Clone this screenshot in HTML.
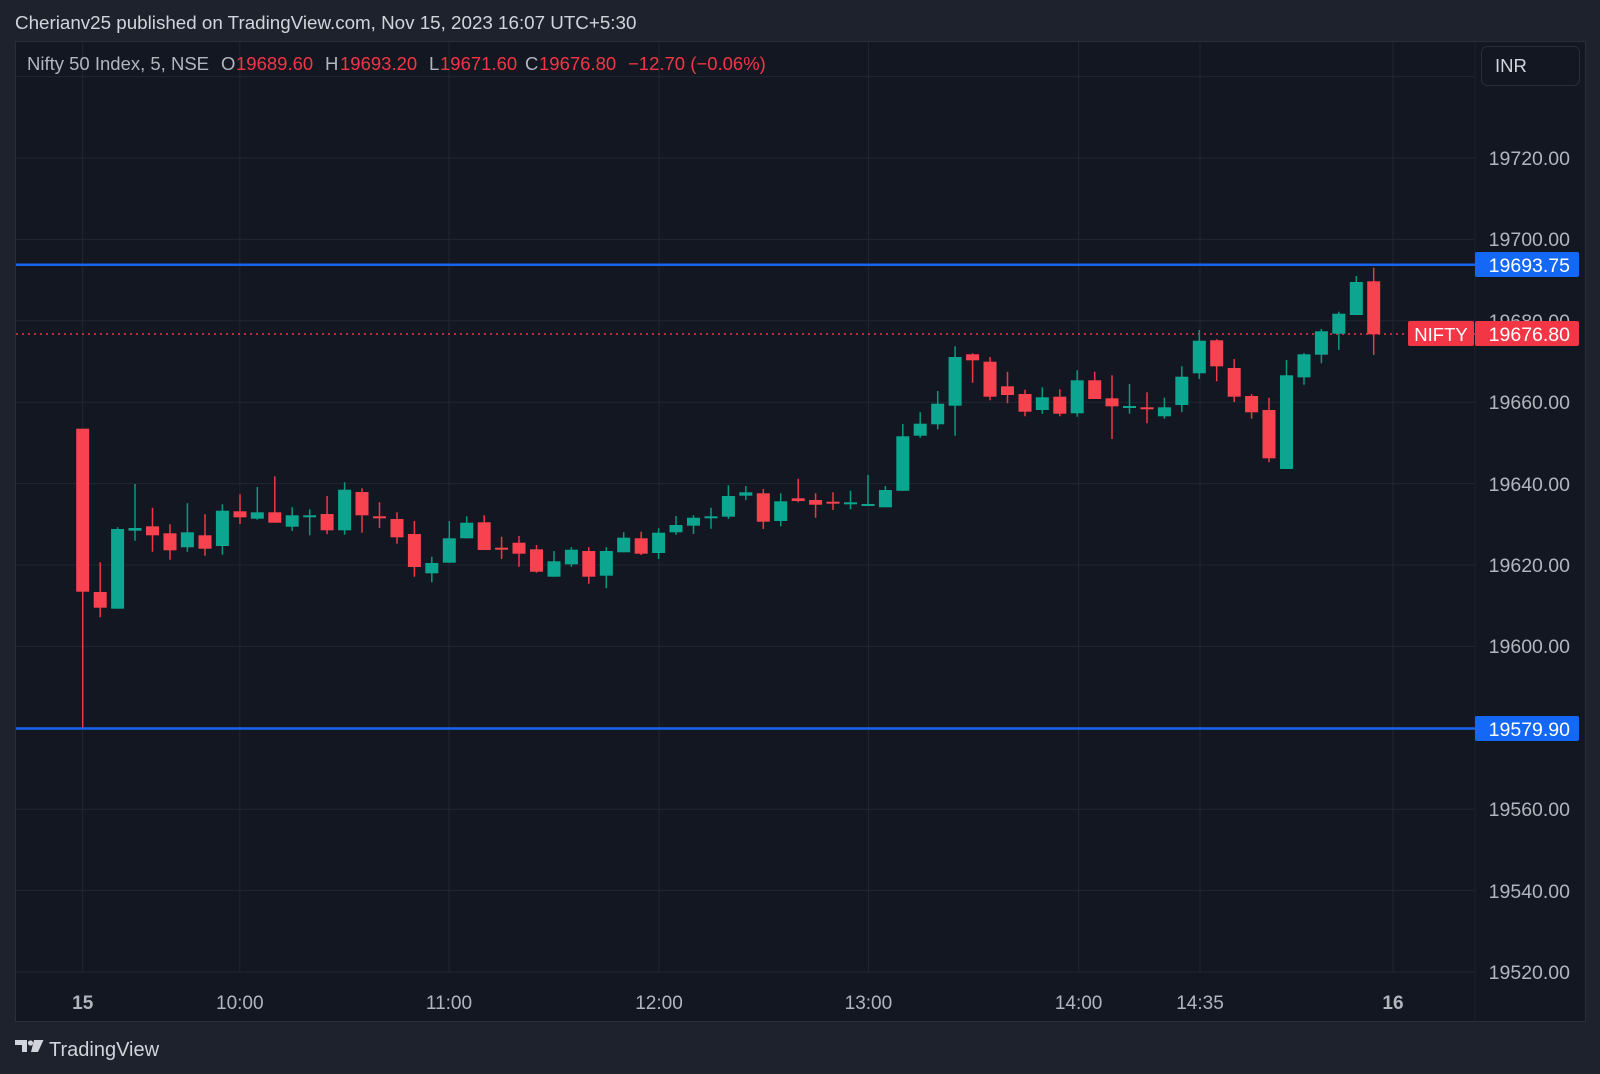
<!DOCTYPE html>
<html><head><meta charset="utf-8"><style>
html,body{margin:0;padding:0;background:#1e222d;width:1600px;height:1074px;overflow:hidden;font-family:"Liberation Sans",sans-serif;}
svg{position:absolute;left:0;top:0}
text{white-space:pre}
</style></head><body>
<svg width="1600" height="1074" viewBox="0 0 1600 1074" xmlns="http://www.w3.org/2000/svg" font-family="Liberation Sans, sans-serif" xml:space="preserve">
<rect x="0" y="0" width="1600" height="1074" fill="#1e222d"/>
<text x="15" y="29" font-size="18.8" fill="#d1d4dc">Cherianv25 published on TradingView.com, Nov 15, 2023 16:07 UTC+5:30</text>
<rect x="15.5" y="41.5" width="1570" height="980" fill="#131722" stroke="#2a2e39"/>
<g stroke="#222631" stroke-width="1">
<path d="M16 76.6H1475M16 158H1475M16 239.4H1475M16 320.8H1475M16 402.2H1475M16 483.6H1475M16 565H1475M16 646.4H1475M16 727.8H1475M16 809.2H1475M16 890.6H1475M16 972H1475"/>
<path d="M82.7 42V972M239.8 42V972M449 42V972M659 42V972M868.4 42V972M1078.6 42V972M1200 42V972M1393 42V972"/>
</g>
<path d="M1475 42V1021" stroke="#1c2030"/>
<g font-size="18.5" fill="#b2b5be">
<text x="27" y="70">Nifty 50 Index, 5, NSE</text>
<text x="221" y="70">O</text><text x="236" y="70" fill="#f23645">19689.60</text>
<text x="325" y="70">H</text><text x="340" y="70" fill="#f23645">19693.20</text>
<text x="429" y="70">L</text><text x="440" y="70" fill="#f23645">19671.60</text>
<text x="525" y="70">C</text><text x="539" y="70" fill="#f23645">19676.80</text>
<text x="628" y="70" fill="#f23645">−12.70 (−0.06%)</text>
</g>
<rect x="1481.5" y="46.5" width="98" height="39" rx="6" fill="#131722" stroke="#2a2e39"/>
<text x="1495" y="72" font-size="18.5" fill="#d1d4dc">INR</text>
<g font-size="19.5" fill="#b2b5be" text-anchor="end">
<text x="1570" y="165">19720.00</text><text x="1570" y="246">19700.00</text><text x="1570" y="328">19680.00</text><text x="1570" y="409">19660.00</text><text x="1570" y="491">19640.00</text><text x="1570" y="572">19620.00</text><text x="1570" y="653">19600.00</text><text x="1570" y="816">19560.00</text><text x="1570" y="898">19540.00</text><text x="1570" y="979">19520.00</text>
</g>
<g font-size="19" fill="#b2b5be" text-anchor="middle">
<text x="82.7" y="1009" font-weight="bold">15</text><text x="239.8" y="1009">10:00</text><text x="449" y="1009">11:00</text><text x="659" y="1009">12:00</text><text x="868.4" y="1009">13:00</text><text x="1078.6" y="1009">14:00</text><text x="1200" y="1009">14:35</text><text x="1393" y="1009" font-weight="bold">16</text>
</g>
<path d="M16 334H1475" stroke="#f23645" stroke-width="1.5" stroke-dasharray="2 4"/>
<g stroke="#089981" stroke-width="1.5" fill="#089981">
<path fill="none" d="M117.6 527.3V608.7M135 484V540.7M187.4 503.3V551.7M222.4 504.3V554.7M257.3 487V519.7M292.2 507.3V531M309.7 509.3V535.3M344.6 482.3V534.7M431.8 556.7V582.3M449.3 521V562.7M466.7 516.3V538.3M554 551V576.7M571.4 547.3V566.7M606.3 547.3V588.3M623.7 532.3V552.3M658.6 528.3V559M676 516V534.7M693.5 515.3V534M711 507.7V528.7M728.4 485.3V519M745.8 486V500.3M780.7 493.3V526.3M850.5 490.7V509.3M868 475V505.3M885.4 486V507.3M902.8 424V490.8M920.2 412.3V437.7M937.7 391V429.3M955.1 346.3V435.7M1042.3 387.3V413.7M1077.2 370.3V416.7M1129.5 384V413.7M1164.4 397.7V418.7M1181.8 366.3V412.3M1199.3 330V379M1286.5 360V469M1304 353V384.7M1321.4 329V363.3M1338.8 311.7V350M1356.3 276V315"/>
<g stroke="none" fill="#0ca690">
<rect x="111.1" y="529" width="13" height="79.7"/><rect x="128.5" y="528" width="13" height="2.7"/><rect x="180.9" y="532.3" width="13" height="15"/><rect x="215.9" y="510.7" width="13" height="35.3"/><rect x="250.8" y="512.3" width="13" height="6.4"/><rect x="285.7" y="515.3" width="13" height="11.4"/><rect x="303.2" y="515.3" width="13" height="2"/><rect x="338.1" y="489.7" width="13" height="40.6"/><rect x="425.3" y="563" width="13" height="10.3"/><rect x="442.8" y="538.3" width="13" height="24.4"/><rect x="460.2" y="522.7" width="13" height="15.6"/><rect x="547.5" y="561.3" width="13" height="15.4"/><rect x="564.9" y="549.7" width="13" height="14.6"/><rect x="599.8" y="551" width="13" height="24.7"/><rect x="617.2" y="537.7" width="13" height="14.6"/><rect x="652.1" y="532.7" width="13" height="20.3"/><rect x="669.5" y="525" width="13" height="7.3"/><rect x="687" y="517.7" width="13" height="8"/><rect x="704.5" y="516.3" width="13" height="2"/><rect x="721.9" y="496" width="13" height="20.7"/><rect x="739.3" y="492.3" width="13" height="3.4"/><rect x="774.2" y="501.3" width="13" height="19.7"/><rect x="844" y="502.3" width="13" height="2"/><rect x="861.5" y="504" width="13" height="2"/><rect x="878.9" y="490" width="13" height="17.3"/><rect x="896.3" y="436.3" width="13" height="54.5"/><rect x="913.7" y="423.7" width="13" height="12"/><rect x="931.2" y="403.7" width="13" height="20.6"/><rect x="948.6" y="357" width="13" height="48.7"/><rect x="1035.8" y="397.3" width="13" height="12.7"/><rect x="1070.7" y="380.3" width="13" height="33"/><rect x="1123" y="406" width="13" height="2"/><rect x="1157.9" y="407.3" width="13" height="9"/><rect x="1175.3" y="376.7" width="13" height="28.3"/><rect x="1192.8" y="340.7" width="13" height="32.6"/><rect x="1280" y="375.3" width="13" height="93.7"/><rect x="1297.5" y="354.3" width="13" height="23"/><rect x="1314.9" y="331.3" width="13" height="23.4"/><rect x="1332.3" y="313.7" width="13" height="20"/><rect x="1349.8" y="282" width="13" height="33"/>
</g></g>
<g stroke="#f23645" stroke-width="1.5">
<path fill="none" d="M82.7 428.7V728.5M100.2 562.3V617.3M152.5 507.7V551.7M170 524.3V559.7M205 514.3V555.7M240 494.3V524M274.8 476.3V522.7M327.1 496V534.3M362 488.3V532.7M379.5 502.3V528M397 512.3V543.7M414.4 521V576.7M484.2 515.3V550M501.6 536.7V559M519 536V566.7M536.5 545V572.7M588.8 547.3V583.7M641.2 531.7V555M763.3 489V529M798.2 478.7V502.3M815.6 493.3V517.7M833 492.3V510M972.6 353.3V382.7M990 357V400.3M1007.5 371.7V403.3M1025 389.7V416.3M1059.8 389.3V416.3M1094.7 371.7V399M1112 375.3V439M1147 392.3V423.3M1216.7 339.3V381.3M1234.2 359V402M1251.6 394V418.7M1269 397.7V462.3M1373.7 267.7V355"/>
<g stroke="none" fill="#f7434f">
<rect x="76.2" y="428.7" width="13" height="163"/><rect x="93.7" y="592" width="13" height="15.7"/><rect x="146" y="526.3" width="13" height="9"/><rect x="163.5" y="533.3" width="13" height="17"/><rect x="198.5" y="535.3" width="13" height="13.4"/><rect x="233.5" y="511.3" width="13" height="6"/><rect x="268.3" y="512.3" width="13" height="10.4"/><rect x="320.6" y="514" width="13" height="16.3"/><rect x="355.5" y="492" width="13" height="23.3"/><rect x="373" y="516.3" width="13" height="2"/><rect x="390.5" y="519" width="13" height="18.3"/><rect x="407.9" y="534" width="13" height="33"/><rect x="477.7" y="522.3" width="13" height="27.7"/><rect x="495.1" y="547.7" width="13" height="2"/><rect x="512.5" y="542.7" width="13" height="11"/><rect x="530" y="549.3" width="13" height="22.4"/><rect x="582.3" y="551" width="13" height="25.7"/><rect x="634.7" y="538.3" width="13" height="15.4"/><rect x="756.8" y="493.3" width="13" height="28.4"/><rect x="791.7" y="498.3" width="13" height="2.7"/><rect x="809.1" y="500" width="13" height="4.7"/><rect x="826.5" y="501.7" width="13" height="2"/><rect x="966.1" y="354.3" width="13" height="6"/><rect x="983.5" y="361.7" width="13" height="35"/><rect x="1001" y="386.3" width="13" height="8.7"/><rect x="1018.5" y="394" width="13" height="17.7"/><rect x="1053.3" y="396.7" width="13" height="17"/><rect x="1088.2" y="380.3" width="13" height="18.7"/><rect x="1105.5" y="398.3" width="13" height="8"/><rect x="1140.5" y="407.3" width="13" height="2"/><rect x="1210.2" y="340.3" width="13" height="26"/><rect x="1227.7" y="368" width="13" height="28.7"/><rect x="1245.1" y="396" width="13" height="16.3"/><rect x="1262.5" y="410" width="13" height="48.3"/><rect x="1367.2" y="281.3" width="13" height="53"/>
</g></g>
<path d="M16 264.8H1475M16 728.5H1475" stroke="#1565f0" stroke-width="2.5"/>
<rect x="1475" y="252" width="104" height="25" rx="2" fill="#1368f5"/>
<text x="1570" y="272" font-size="19.5" fill="#fff" text-anchor="end">19693.75</text>
<rect x="1475" y="716" width="104" height="25" rx="2" fill="#1368f5"/>
<text x="1570" y="736" font-size="19.5" fill="#fff" text-anchor="end">19579.90</text>
<rect x="1408" y="321" width="66" height="25" rx="2" fill="#f23645"/>
<text x="1441" y="341" font-size="18.5" fill="#fff" text-anchor="middle">NIFTY</text>
<rect x="1475" y="321" width="104" height="25" rx="2" fill="#f23645"/>
<text x="1570" y="341" font-size="19.5" fill="#fff" text-anchor="end">19676.80</text>
<g fill="#d1d4dc">
<path d="M15 1040h12v12h-5v-7h-7z"/><circle cx="30.5" cy="1043" r="2.6"/><path d="M34 1040h9.5l-5.5 12h-7z"/>
</g>
<text x="49" y="1056" font-size="20" fill="#d1d4dc">TradingView</text>
</svg>
</body></html>
